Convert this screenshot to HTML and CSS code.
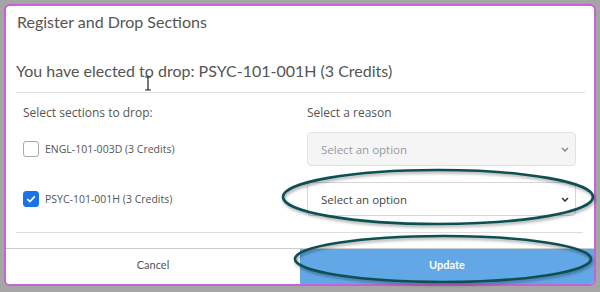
FILE: index.html
```html
<!DOCTYPE html>
<html lang="en">
<head>
    <meta charset="UTF-8">
    <title>Register and Drop Sections</title>
    <link rel="stylesheet" href="styles.css">
</head>
<body>
    <div class="modal">
        <div class="modal-body">
            <h2 class="title">Register and Drop Sections</h2>
            <p class="notice">You have elected to drop: PSYC-101-001H (3 Credits)</p>

            <div class="grid">
                <div class="col-head">Select sections to drop:</div>
                <div class="col-head">Select a reason</div>

                <label class="check">
                    <span class="box"></span>
                    ENGL-101-003D (3 Credits)
                </label>
                <div class="select disabled">
                    <span>Select an option</span>
                    <svg width="8" height="5" viewBox="0 0 8 5"><path d="M1 1 4 4 7 1" fill="none" stroke="#888" stroke-width="1.5"/></svg>
                </div>

                <label class="check">
                    <span class="box checked">
                        <svg width="10" height="8" viewBox="0 0 10 8"><path d="M1.3 4.2 3.9 6.6 8.8 1.4" fill="none" stroke="#fff" stroke-width="1.7"/></svg>
                    </span>
                    PSYC-101-001H (3 Credits)
                </label>
                <div class="select">
                    <span>Select an option</span>
                    <svg width="8" height="5" viewBox="0 0 8 5"><path d="M1 1 4 4 7 1" fill="none" stroke="#333" stroke-width="1.5"/></svg>
                </div>
            </div>
            <hr class="rule">
        </div>

        <div class="footer">
            <button class="btn cancel">Cancel</button>
            <button class="btn update">Update</button>
        </div>
    </div>

    <!-- annotation marks drawn over the screenshot -->
    <svg class="marks" width="600" height="292" viewBox="0 0 600 292">
        <defs>
            <filter id="sh" x="-10%" y="-30%" width="120%" height="160%">
                <feDropShadow dx="1" dy="2" stdDeviation="1.5" flood-color="#000" flood-opacity="0.35"/>
            </filter>
        </defs>
        <ellipse cx="438" cy="197" rx="155" ry="27" fill="none" stroke="#0e4f52" stroke-width="2.7" filter="url(#sh)"/>
        <ellipse cx="443" cy="259" rx="148" ry="23" fill="none" stroke="#0e4f52" stroke-width="2.7" filter="url(#sh)"/>
        <path d="M145 77h6M148 77v13M145 90h6" stroke="#222" stroke-width="1.2" fill="none"/>
    </svg>
</body>
</html>
```

FILE: styles.css
```css
* {
    box-sizing: border-box;
    margin: 0;
    padding: 0;
}

body {
    position: relative;
    width: 600px;
    height: 292px;
    overflow: hidden;
    background-color: #a5a5a5;
    font-family: "Open Sans", sans-serif;
    color: #555;
}

.modal {
    margin: 4px 0 0 4px;
    width: 592px;
    height: 282px;
    background: #fff;
    border: 2px solid #c264d6;
    border-radius: 6px;
    overflow: hidden;
    display: flex;
    flex-direction: column;
}

.modal-body {
    flex: 1;
    padding: 0 9px 0 10px;
}

.title {
    font-family: Lato, sans-serif;
    font-weight: 400;
    font-size: 16px;
    color: #555;
    padding: 5px 0 0 1px;
    line-height: 22px;
}

.notice {
    font-family: Lato, sans-serif;
    font-size: 16px;
    color: #555;
    margin-top: 27px;
    line-height: 22px;
    padding-bottom: 10px;
    border-bottom: 1px solid #ddd;
}

.grid {
    display: grid;
    grid-template-columns: 284px 269px;
    grid-template-rows: 20px 50px 50px;
    padding: 11px 0 0 7px;
    align-items: center;
}

.col-head {
    font-size: 12px;
    color: #555;
    align-self: start;
    line-height: 18px;
}

.check {
    display: flex;
    align-items: center;
    gap: 6px;
    font-size: 10.5px;
    color: #555;
}

.box {
    width: 16px;
    height: 16px;
    border: 1px solid #aaa;
    border-radius: 3px;
    background: #fff;
    display: flex;
    align-items: center;
    justify-content: center;
}

.box.checked {
    background: #1a73e8;
    border-color: #1a73e8;
}

.select {
    height: 34px;
    border: 1px solid #d6d6d6;
    border-radius: 4px;
    background: #fff;
    display: flex;
    align-items: center;
    justify-content: space-between;
    padding: 0 6px 0 13px;
    font-size: 11.5px;
    color: #444;
}

.select.disabled {
    background: #f5f5f5;
    color: #999;
    border-color: #e2e2e2;
}

.rule {
    border: none;
    border-top: 1px solid #ddd;
    margin-top: 8px;
    margin-right: 2px;
}

.footer {
    display: flex;
    height: 36px;
    border-top: 1px solid #ccc;
}

.btn {
    flex: 1;
    border: none;
    font-family: Lato, sans-serif;
    font-size: 11px;
    padding-bottom: 4px;
    cursor: pointer;
}

.cancel {
    background: #fff;
    color: #555;
}

.update {
    background: #63a8e6;
    color: #fff;
    font-weight: 700;
}

.marks {
    position: absolute;
    left: 0;
    top: 0;
    pointer-events: none;
}
```
